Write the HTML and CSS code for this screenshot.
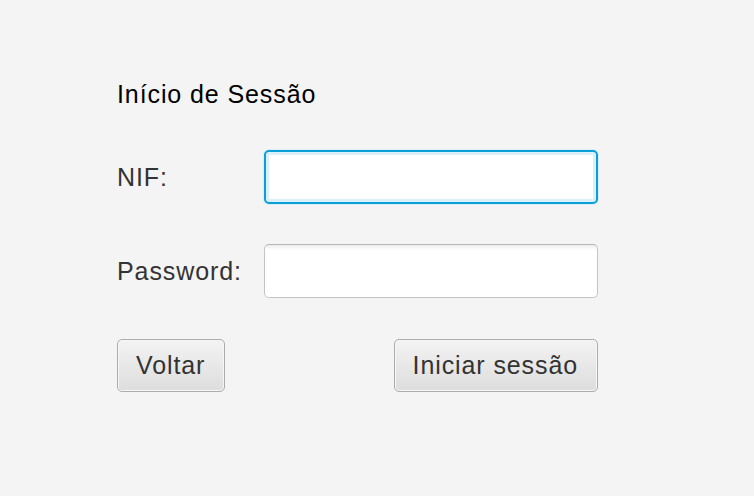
FILE: index.html
```html
<!DOCTYPE html>
<html lang="pt">
<head>
<meta charset="utf-8">
<title>Início de Sessão</title>
<link rel="stylesheet" href="styles.css">
</head>
<body>
<main class="form">
  <h1 class="title">Início de Sessão</h1>
  <div class="fields">
    <label class="label" for="nif">NIF:</label>
    <div class="input input-focused"><input id="nif" type="text"></div>
    <label class="label" for="pw">Password:</label>
    <div class="input"><input id="pw" type="password"></div>
  </div>
  <div class="actions">
    <button class="btn" type="button">Voltar</button>
    <button class="btn" type="button">Iniciar sessão</button>
  </div>
</main>
</body>
</html>
```
FILE: styles.css
```css
html, body {
  margin: 0;
  padding: 0;
  background: #f4f4f4;
  height: 100%;
}
body {
  font-family: "Liberation Sans", Arial, sans-serif;
  font-size: 25px;
  letter-spacing: 0.9px;
  color: #333333;
}
.form {
  width: 481px;
  margin-left: 117px;
  padding-top: 79px;
  display: flex;
  flex-direction: column;
}
.title {
  margin: 0;
  font-size: 25px;
  font-weight: normal;
  line-height: 30px;
  height: 30px;
  color: #000;
}
.fields {
  margin-top: 41px;
  display: grid;
  grid-template-columns: 147px 334px;
  grid-auto-rows: 54px;
  row-gap: 40px;
  align-items: center;
}
.label {
  line-height: 30px;
  color: #333;
}
.input {
  box-sizing: border-box;
  height: 54px;
  border-radius: 5px;
  border: 1px solid #c4c4c4;
  border-top-color: #b6b6b6;
  background: linear-gradient(#ececec, #ffffff 5px, #ffffff);
  padding: 1px;
}
.input input {
  display: block;
  width: 100%;
  height: 100%;
  box-sizing: border-box;
  border: 0;
  outline: 0;
  background: transparent;
  font: inherit;
  padding: 0 12px;
}
.input-focused {
  border: 2px solid #0a9fd6;
  background: #ffffff;
  padding: 0;
  box-shadow: 0 0 0 1px #dbeef8, inset 0 0 0 3px #dcf0fa;
}
.actions {
  margin-top: 41px;
  display: flex;
  justify-content: space-between;
}
.btn {
  box-sizing: border-box;
  height: 53px;
  padding: 0 19px 0 18px;
  border: 1px solid #acacac;
  border-radius: 5px;
  background: linear-gradient(#f3f3f3, #dddddd);
  box-shadow: inset 0 0 0 1px #f6f6f6;
  font: inherit;
  letter-spacing: inherit;
  color: #333;
}
```
